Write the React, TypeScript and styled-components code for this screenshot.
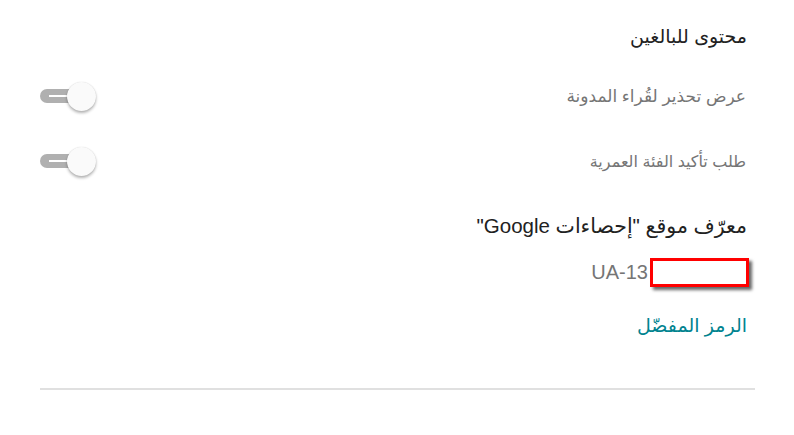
import React from "react";
import styled, { createGlobalStyle } from "styled-components";

const Global = createGlobalStyle`
  html, body { margin: 0; padding: 0; background: #ffffff; }
  body { font-family: "Liberation Sans", Arial, "DejaVu Sans", sans-serif; }
`;

const Page = styled.div`
  direction: rtl;
  width: 794px;
  height: 435px;
  box-sizing: border-box;
  padding: 25px 39px 0 40px;
  display: flex;
  flex-direction: column;
`;

const Heading = styled.div<{ $top?: number; $size?: number }>`
  font-size: ${(p) => p.$size ?? 19}px;
  line-height: 24px;
  color: #212121;
  padding-right: 8px;
  margin-top: ${(p) => p.$top ?? 0}px;
  white-space: nowrap;
`;

const Row = styled.div<{ $top: number }>`
  display: flex;
  align-items: center;
  justify-content: space-between;
  height: 48px;
  margin-top: ${(p) => p.$top}px;
  padding-right: 9px;
`;

const Label = styled.span<{ $size?: number }>`
  font-size: ${(p) => p.$size ?? 17}px;
  color: #757575;
`;

const Switch = styled.div`
  position: relative;
  width: 56px;
  height: 29px;
  direction: ltr;
  flex-shrink: 0;
`;

const Track = styled.div`
  position: absolute;
  left: 0;
  top: 7px;
  width: 48px;
  height: 14px;
  border-radius: 7px;
  background: #b0b0b0;
`;

const TrackMark = styled.div`
  position: absolute;
  left: 9px;
  top: 6px;
  width: 20px;
  height: 2px;
  background: #ffffff;
`;

const Thumb = styled.div`
  position: absolute;
  right: 0;
  top: 0;
  width: 29px;
  height: 29px;
  border-radius: 50%;
  background: #fafafa;
  box-shadow: 0 2px 3px rgba(0, 0, 0, 0.3), 0 0 1px rgba(0, 0, 0, 0.15);
`;

const IdRow = styled.div`
  display: flex;
  direction: ltr;
  justify-content: flex-end;
  align-items: center;
  margin-top: 20px;
  height: 29px;
  padding-right: 6px;
`;

const IdText = styled.span`
  font-size: 20px;
  color: #757575;
`;

const Redact = styled.div`
  width: 99px;
  height: 29px;
  box-sizing: border-box;
  border: 3px solid #ff0000;
  background: #ffffff;
  box-shadow: 3px 3px 3px rgba(0, 0, 0, 0.6);
  margin-left: 2px;
`;

const Link = styled.a`
  display: block;
  margin-top: 27px;
  padding-right: 8px;
  font-size: 19px;
  line-height: 24px;
  color: #00838f;
  text-decoration: none;
`;

const Divider = styled.hr`
  border: 0;
  border-top: 2px solid #e0e0e0;
  margin: 50px 0 0 0;
  width: 715px;
`;

function Toggle() {
  return (
    <Switch>
      <Track>
        <TrackMark />
      </Track>
      <Thumb />
    </Switch>
  );
}

export default function App() {
  return (
    <>
      <Global />
      <Page>
        <Heading>محتوى للبالغين</Heading>
        <Row $top={23}>
          <Label>عرض تحذير لقُراء المدونة</Label>
          <Toggle />
        </Row>
        <Row $top={17}>
          <Label $size={16}>طلب تأكيد الفئة العمرية</Label>
          <Toggle />
        </Row>
        <Heading $top={29} $size={20.5}>معرّف موقع "إحصاءات Google"</Heading>
        <IdRow>
          <IdText>UA-13</IdText>
          <Redact />
        </IdRow>
        <Link href="#">الرمز المفضّل</Link>
        <Divider />
      </Page>
    </>
  );
}
